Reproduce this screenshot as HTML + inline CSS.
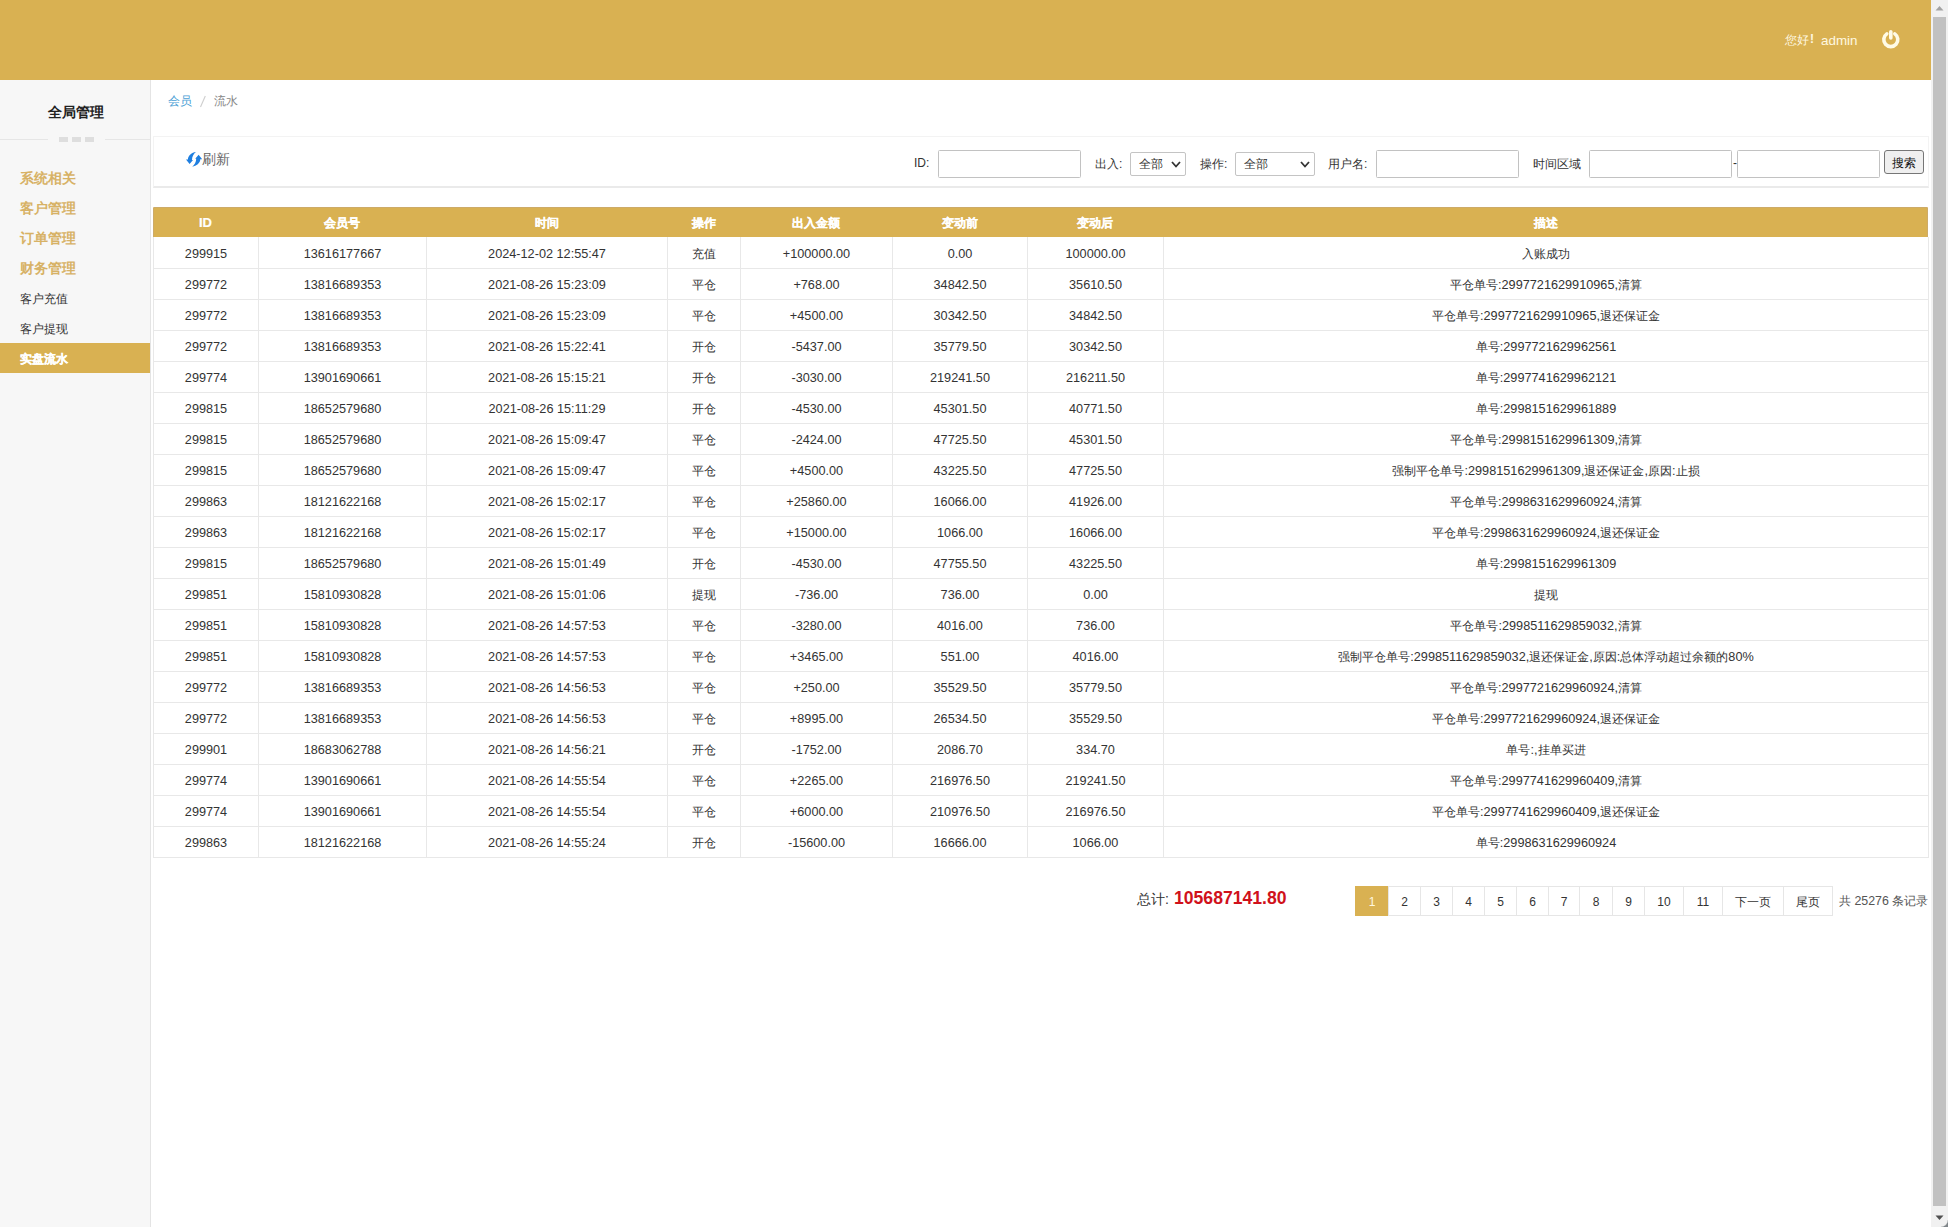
<!DOCTYPE html>
<html>
<head>
<meta charset="utf-8">
<style>
html,body{margin:0;padding:0;}
body{width:1948px;height:1227px;overflow:hidden;position:relative;background:#fff;font-family:"Liberation Sans",sans-serif;color:#333;}
.abs{position:absolute;}
#hdr{position:absolute;left:0;top:0;width:1931px;height:80px;background:#d9b152;}
#hello{position:absolute;left:1785px;top:32px;width:80px;height:16px;font-size:12px;color:#fff8e0;white-space:nowrap;}
#power{position:absolute;left:1881px;top:30px;width:20px;height:20px;}
#side{position:absolute;left:0;top:80px;width:150px;height:1147px;background:#f7f7f7;border-right:1px solid #e4e4e4;}
#side .title{position:absolute;left:1px;top:24px;width:150px;text-align:center;font-size:14px;font-weight:bold;color:#222;}
#side .sepl{position:absolute;top:59px;height:1px;background:#e6e6e6;}
#side .dash{position:absolute;top:57px;width:9px;height:5px;background:#dedede;}
.m1{position:absolute;left:20px;font-size:14px;font-weight:bold;color:#d7b266;white-space:nowrap;}
.m2{position:absolute;left:20px;font-size:12px;color:#333;white-space:nowrap;}
.mact{position:absolute;left:0;width:150px;height:29px;background:#d9b152;}
#scroll{position:absolute;left:1931px;top:0;width:17px;height:1227px;background:#f1f1f1;}
#thumb{position:absolute;left:2px;top:17px;width:13px;height:1189px;background:#c1c1c1;}
.crumb{position:absolute;top:93px;font-size:12px;white-space:nowrap;}
#tool{position:absolute;left:153px;top:136px;width:1774px;height:49px;border:1px solid #f3f3f3;border-bottom:2px solid #eaeaea;background:#fff;}
.lbl{position:absolute;font-size:12px;color:#333;white-space:nowrap;}
.inp{position:absolute;top:150px;height:26px;border:1px solid #c2c2c2;border-radius:1.5px;background:#fff;}
.sel{position:absolute;top:152px;height:22px;border:1px solid #c4c4c4;border-radius:2px;background:#fff;font-size:12px;}
.btn{position:absolute;border:1px solid #767676;border-radius:3px;background:#efefef;font-size:12px;text-align:center;color:#111;}
.thead{position:absolute;background:#d9b152;border-radius:2px 2px 0 0;box-shadow:inset 0 1px 0 #cdab68,inset 1px 0 0 #cdab68,inset -1px 0 0 #cdab68;}
.th{position:absolute;text-align:center;color:#fff;font-weight:bold;-webkit-text-stroke:0.2px #fff;font-size:13px;padding-top:1px;box-sizing:border-box;}
.vl{position:absolute;width:1px;background:#e8e8e8;}
.hl{position:absolute;height:1px;background:#e8e8e8;}
.td{position:absolute;height:30px;line-height:32px;text-align:center;font-size:12.7px;color:#333;white-space:nowrap;}
.cj{font-size:12px;}
.pg{position:absolute;top:886px;height:28px;line-height:30px;text-align:center;font-size:12px;color:#333;border:1px solid #e6e6e6;background:#fff;}
</style>
</head>
<body>
<div id="hdr">
  <div id="hello"><span class="abs" style="left:0;top:0">您好</span><span class="abs" style="left:25px;top:0;font-weight:bold">!</span><span class="abs" style="left:36px;top:1px;font-size:13.4px">admin</span></div>
  <svg id="power" viewBox="0 0 20 20"><path d="M5.79 3.87 A7 7 0 1 0 13.81 3.87" fill="none" stroke="#fffbe6" stroke-width="3.6" stroke-linecap="round"/><line x1="9.8" y1="1.8" x2="9.8" y2="8" stroke="#fffbe6" stroke-width="3.6" stroke-linecap="round"/></svg>
</div>
<div id="side">
  <div class="title">全局管理</div>
  <div class="sepl" style="left:0;width:48px"></div>
  <div class="dash" style="left:59px"></div>
  <div class="dash" style="left:72px"></div>
  <div class="dash" style="left:85px"></div>
  <div class="sepl" style="left:105px;width:45px"></div>
  <div class="m1" style="top:90px">系统相关</div>
  <div class="m1" style="top:120px">客户管理</div>
  <div class="m1" style="top:150px">订单管理</div>
  <div class="m1" style="top:180px">财务管理</div>
  <div class="m2" style="top:211px">客户充值</div>
  <div class="m2" style="top:241px">客户提现</div>
  <div class="mact" style="top:263px;height:30px"></div>
  <div class="m2" style="top:271px;color:#fff;font-weight:bold;-webkit-text-stroke:0.3px #fff">实盘流水</div>
</div>
<div id="scroll">
  <svg class="abs" style="left:4px;top:5px" width="9" height="6" viewBox="0 0 9 6"><path d="M0.5 5.5 L4.5 1 L8.5 5.5 Z" fill="#a3a3a3"/></svg>
  <div id="thumb"></div>
  <div class="abs" style="left:10px;top:1220px;width:7px;height:7px;background:radial-gradient(circle at 0 0,#f1f1f1 6.2px,#7f8589 7.4px)"></div>
  <svg class="abs" style="left:4px;top:1215px" width="9" height="6" viewBox="0 0 9 6"><path d="M0.5 0.5 L4.5 5 L8.5 0.5 Z" fill="#505050"/></svg>
</div>

<div class="crumb" style="left:168px;color:#4aa0d5">会员</div>
<svg class="abs" style="left:199px;top:95px" width="8" height="13" viewBox="0 0 8 13"><line x1="6.3" y1="1" x2="1.5" y2="12" stroke="#cfcfcf" stroke-width="1.1"/></svg>
<div class="crumb" style="left:214px;color:#888">流水</div>

<div id="tool"></div>
<svg class="abs" style="left:183px;top:149px" width="22" height="20" viewBox="0 0 22 20"><path d="M12.9 3.0 C8.8 3.6 5.0 6.6 4.9 10.4 L3.0 10.5 L6.6 15.0 L10.0 11.0 L9.0 10.9 C9.0 7.6 10.6 4.8 12.9 3.0Z" fill="#1f7fe0"/><path d="M9.3 17.7 C13.4 17.1 17.2 14.1 17.3 10.3 L19.2 10.2 L15.6 5.7 L12.2 9.7 L13.2 9.8 C13.2 13.1 11.6 15.9 9.3 17.7Z" fill="#1f7fe0"/></svg>
<div class="lbl" style="left:202px;top:151px;font-size:14px;color:#666">刷新</div>

<div class="lbl" style="left:914px;top:156px">ID:</div>
<div class="inp" style="left:938px;width:141px"></div>
<div class="lbl" style="left:1095px;top:156px">出入:</div>
<div class="sel" style="left:1130px;width:54px"><span class="abs" style="left:8px;top:3px">全部</span><svg class="abs" style="left:40px;top:8px" width="10" height="7" viewBox="0 0 10 7"><path d="M1 1 L5 5.5 L9 1" fill="none" stroke="#333" stroke-width="1.8"/></svg></div>
<div class="lbl" style="left:1200px;top:156px">操作:</div>
<div class="sel" style="left:1235px;width:78px"><span class="abs" style="left:8px;top:3px">全部</span><svg class="abs" style="left:64px;top:8px" width="10" height="7" viewBox="0 0 10 7"><path d="M1 1 L5 5.5 L9 1" fill="none" stroke="#333" stroke-width="1.8"/></svg></div>
<div class="lbl" style="left:1328px;top:156px">用户名:</div>
<div class="inp" style="left:1376px;width:141px"></div>
<div class="lbl" style="left:1533px;top:156px">时间区域</div>
<div class="inp" style="left:1589px;width:141px"></div>
<div class="lbl" style="left:1733px;top:156px">-</div>
<div class="inp" style="left:1737px;width:141px"></div>
<div class="btn" style="left:1884px;top:150px;width:38px;height:22px;line-height:24px">搜索</div>

<div class="thead" style="left:153px;top:207px;width:1775px;height:30px"></div>
<div class="th" style="left:153px;top:207px;width:105px;height:30px;line-height:30px">ID</div>
<div class="th" style="left:258px;top:207px;width:168px;height:30px;line-height:30px"><span class="cj">会员号</span></div>
<div class="th" style="left:426px;top:207px;width:241px;height:30px;line-height:30px"><span class="cj">时间</span></div>
<div class="th" style="left:667px;top:207px;width:73px;height:30px;line-height:30px"><span class="cj">操作</span></div>
<div class="th" style="left:740px;top:207px;width:152px;height:30px;line-height:30px"><span class="cj">出入金额</span></div>
<div class="th" style="left:892px;top:207px;width:135px;height:30px;line-height:30px"><span class="cj">变动前</span></div>
<div class="th" style="left:1027px;top:207px;width:136px;height:30px;line-height:30px"><span class="cj">变动后</span></div>
<div class="th" style="left:1163px;top:207px;width:766px;height:30px;line-height:30px"><span class="cj">描述</span></div>
<div class="vl" style="left:153px;top:237px;height:621px"></div>
<div class="vl" style="left:258px;top:237px;height:621px"></div>
<div class="vl" style="left:426px;top:237px;height:621px"></div>
<div class="vl" style="left:667px;top:237px;height:621px"></div>
<div class="vl" style="left:740px;top:237px;height:621px"></div>
<div class="vl" style="left:892px;top:237px;height:621px"></div>
<div class="vl" style="left:1027px;top:237px;height:621px"></div>
<div class="vl" style="left:1163px;top:237px;height:621px"></div>
<div class="vl" style="left:1928px;top:237px;height:621px"></div>
<div class="hl" style="left:153px;top:268px;width:1776px"></div>
<div class="hl" style="left:153px;top:299px;width:1776px"></div>
<div class="hl" style="left:153px;top:330px;width:1776px"></div>
<div class="hl" style="left:153px;top:361px;width:1776px"></div>
<div class="hl" style="left:153px;top:392px;width:1776px"></div>
<div class="hl" style="left:153px;top:423px;width:1776px"></div>
<div class="hl" style="left:153px;top:454px;width:1776px"></div>
<div class="hl" style="left:153px;top:485px;width:1776px"></div>
<div class="hl" style="left:153px;top:516px;width:1776px"></div>
<div class="hl" style="left:153px;top:547px;width:1776px"></div>
<div class="hl" style="left:153px;top:578px;width:1776px"></div>
<div class="hl" style="left:153px;top:609px;width:1776px"></div>
<div class="hl" style="left:153px;top:640px;width:1776px"></div>
<div class="hl" style="left:153px;top:671px;width:1776px"></div>
<div class="hl" style="left:153px;top:702px;width:1776px"></div>
<div class="hl" style="left:153px;top:733px;width:1776px"></div>
<div class="hl" style="left:153px;top:764px;width:1776px"></div>
<div class="hl" style="left:153px;top:795px;width:1776px"></div>
<div class="hl" style="left:153px;top:826px;width:1776px"></div>
<div class="hl" style="left:153px;top:857px;width:1776px"></div>
<div class="td" style="left:154px;top:238px;width:104px">299915</div>
<div class="td" style="left:259px;top:238px;width:167px">13616177667</div>
<div class="td" style="left:427px;top:238px;width:240px">2024-12-02 12:55:47</div>
<div class="td" style="left:668px;top:238px;width:72px"><span class="cj">充值</span></div>
<div class="td" style="left:741px;top:238px;width:151px">+100000.00</div>
<div class="td" style="left:893px;top:238px;width:134px">0.00</div>
<div class="td" style="left:1028px;top:238px;width:135px">100000.00</div>
<div class="td" style="left:1164px;top:238px;width:764px"><span class="cj">入账成功</span></div>
<div class="td" style="left:154px;top:269px;width:104px">299772</div>
<div class="td" style="left:259px;top:269px;width:167px">13816689353</div>
<div class="td" style="left:427px;top:269px;width:240px">2021-08-26 15:23:09</div>
<div class="td" style="left:668px;top:269px;width:72px"><span class="cj">平仓</span></div>
<div class="td" style="left:741px;top:269px;width:151px">+768.00</div>
<div class="td" style="left:893px;top:269px;width:134px">34842.50</div>
<div class="td" style="left:1028px;top:269px;width:135px">35610.50</div>
<div class="td" style="left:1164px;top:269px;width:764px"><span class="cj">平仓单号</span>:2997721629910965,<span class="cj">清算</span></div>
<div class="td" style="left:154px;top:300px;width:104px">299772</div>
<div class="td" style="left:259px;top:300px;width:167px">13816689353</div>
<div class="td" style="left:427px;top:300px;width:240px">2021-08-26 15:23:09</div>
<div class="td" style="left:668px;top:300px;width:72px"><span class="cj">平仓</span></div>
<div class="td" style="left:741px;top:300px;width:151px">+4500.00</div>
<div class="td" style="left:893px;top:300px;width:134px">30342.50</div>
<div class="td" style="left:1028px;top:300px;width:135px">34842.50</div>
<div class="td" style="left:1164px;top:300px;width:764px"><span class="cj">平仓单号</span>:2997721629910965,<span class="cj">退还保证金</span></div>
<div class="td" style="left:154px;top:331px;width:104px">299772</div>
<div class="td" style="left:259px;top:331px;width:167px">13816689353</div>
<div class="td" style="left:427px;top:331px;width:240px">2021-08-26 15:22:41</div>
<div class="td" style="left:668px;top:331px;width:72px"><span class="cj">开仓</span></div>
<div class="td" style="left:741px;top:331px;width:151px">-5437.00</div>
<div class="td" style="left:893px;top:331px;width:134px">35779.50</div>
<div class="td" style="left:1028px;top:331px;width:135px">30342.50</div>
<div class="td" style="left:1164px;top:331px;width:764px"><span class="cj">单号</span>:2997721629962561</div>
<div class="td" style="left:154px;top:362px;width:104px">299774</div>
<div class="td" style="left:259px;top:362px;width:167px">13901690661</div>
<div class="td" style="left:427px;top:362px;width:240px">2021-08-26 15:15:21</div>
<div class="td" style="left:668px;top:362px;width:72px"><span class="cj">开仓</span></div>
<div class="td" style="left:741px;top:362px;width:151px">-3030.00</div>
<div class="td" style="left:893px;top:362px;width:134px">219241.50</div>
<div class="td" style="left:1028px;top:362px;width:135px">216211.50</div>
<div class="td" style="left:1164px;top:362px;width:764px"><span class="cj">单号</span>:2997741629962121</div>
<div class="td" style="left:154px;top:393px;width:104px">299815</div>
<div class="td" style="left:259px;top:393px;width:167px">18652579680</div>
<div class="td" style="left:427px;top:393px;width:240px">2021-08-26 15:11:29</div>
<div class="td" style="left:668px;top:393px;width:72px"><span class="cj">开仓</span></div>
<div class="td" style="left:741px;top:393px;width:151px">-4530.00</div>
<div class="td" style="left:893px;top:393px;width:134px">45301.50</div>
<div class="td" style="left:1028px;top:393px;width:135px">40771.50</div>
<div class="td" style="left:1164px;top:393px;width:764px"><span class="cj">单号</span>:2998151629961889</div>
<div class="td" style="left:154px;top:424px;width:104px">299815</div>
<div class="td" style="left:259px;top:424px;width:167px">18652579680</div>
<div class="td" style="left:427px;top:424px;width:240px">2021-08-26 15:09:47</div>
<div class="td" style="left:668px;top:424px;width:72px"><span class="cj">平仓</span></div>
<div class="td" style="left:741px;top:424px;width:151px">-2424.00</div>
<div class="td" style="left:893px;top:424px;width:134px">47725.50</div>
<div class="td" style="left:1028px;top:424px;width:135px">45301.50</div>
<div class="td" style="left:1164px;top:424px;width:764px"><span class="cj">平仓单号</span>:2998151629961309,<span class="cj">清算</span></div>
<div class="td" style="left:154px;top:455px;width:104px">299815</div>
<div class="td" style="left:259px;top:455px;width:167px">18652579680</div>
<div class="td" style="left:427px;top:455px;width:240px">2021-08-26 15:09:47</div>
<div class="td" style="left:668px;top:455px;width:72px"><span class="cj">平仓</span></div>
<div class="td" style="left:741px;top:455px;width:151px">+4500.00</div>
<div class="td" style="left:893px;top:455px;width:134px">43225.50</div>
<div class="td" style="left:1028px;top:455px;width:135px">47725.50</div>
<div class="td" style="left:1164px;top:455px;width:764px"><span class="cj">强制平仓单号</span>:2998151629961309,<span class="cj">退还保证金</span>,<span class="cj">原因</span>:<span class="cj">止损</span></div>
<div class="td" style="left:154px;top:486px;width:104px">299863</div>
<div class="td" style="left:259px;top:486px;width:167px">18121622168</div>
<div class="td" style="left:427px;top:486px;width:240px">2021-08-26 15:02:17</div>
<div class="td" style="left:668px;top:486px;width:72px"><span class="cj">平仓</span></div>
<div class="td" style="left:741px;top:486px;width:151px">+25860.00</div>
<div class="td" style="left:893px;top:486px;width:134px">16066.00</div>
<div class="td" style="left:1028px;top:486px;width:135px">41926.00</div>
<div class="td" style="left:1164px;top:486px;width:764px"><span class="cj">平仓单号</span>:2998631629960924,<span class="cj">清算</span></div>
<div class="td" style="left:154px;top:517px;width:104px">299863</div>
<div class="td" style="left:259px;top:517px;width:167px">18121622168</div>
<div class="td" style="left:427px;top:517px;width:240px">2021-08-26 15:02:17</div>
<div class="td" style="left:668px;top:517px;width:72px"><span class="cj">平仓</span></div>
<div class="td" style="left:741px;top:517px;width:151px">+15000.00</div>
<div class="td" style="left:893px;top:517px;width:134px">1066.00</div>
<div class="td" style="left:1028px;top:517px;width:135px">16066.00</div>
<div class="td" style="left:1164px;top:517px;width:764px"><span class="cj">平仓单号</span>:2998631629960924,<span class="cj">退还保证金</span></div>
<div class="td" style="left:154px;top:548px;width:104px">299815</div>
<div class="td" style="left:259px;top:548px;width:167px">18652579680</div>
<div class="td" style="left:427px;top:548px;width:240px">2021-08-26 15:01:49</div>
<div class="td" style="left:668px;top:548px;width:72px"><span class="cj">开仓</span></div>
<div class="td" style="left:741px;top:548px;width:151px">-4530.00</div>
<div class="td" style="left:893px;top:548px;width:134px">47755.50</div>
<div class="td" style="left:1028px;top:548px;width:135px">43225.50</div>
<div class="td" style="left:1164px;top:548px;width:764px"><span class="cj">单号</span>:2998151629961309</div>
<div class="td" style="left:154px;top:579px;width:104px">299851</div>
<div class="td" style="left:259px;top:579px;width:167px">15810930828</div>
<div class="td" style="left:427px;top:579px;width:240px">2021-08-26 15:01:06</div>
<div class="td" style="left:668px;top:579px;width:72px"><span class="cj">提现</span></div>
<div class="td" style="left:741px;top:579px;width:151px">-736.00</div>
<div class="td" style="left:893px;top:579px;width:134px">736.00</div>
<div class="td" style="left:1028px;top:579px;width:135px">0.00</div>
<div class="td" style="left:1164px;top:579px;width:764px"><span class="cj">提现</span></div>
<div class="td" style="left:154px;top:610px;width:104px">299851</div>
<div class="td" style="left:259px;top:610px;width:167px">15810930828</div>
<div class="td" style="left:427px;top:610px;width:240px">2021-08-26 14:57:53</div>
<div class="td" style="left:668px;top:610px;width:72px"><span class="cj">平仓</span></div>
<div class="td" style="left:741px;top:610px;width:151px">-3280.00</div>
<div class="td" style="left:893px;top:610px;width:134px">4016.00</div>
<div class="td" style="left:1028px;top:610px;width:135px">736.00</div>
<div class="td" style="left:1164px;top:610px;width:764px"><span class="cj">平仓单号</span>:2998511629859032,<span class="cj">清算</span></div>
<div class="td" style="left:154px;top:641px;width:104px">299851</div>
<div class="td" style="left:259px;top:641px;width:167px">15810930828</div>
<div class="td" style="left:427px;top:641px;width:240px">2021-08-26 14:57:53</div>
<div class="td" style="left:668px;top:641px;width:72px"><span class="cj">平仓</span></div>
<div class="td" style="left:741px;top:641px;width:151px">+3465.00</div>
<div class="td" style="left:893px;top:641px;width:134px">551.00</div>
<div class="td" style="left:1028px;top:641px;width:135px">4016.00</div>
<div class="td" style="left:1164px;top:641px;width:764px"><span class="cj">强制平仓单号</span>:2998511629859032,<span class="cj">退还保证金</span>,<span class="cj">原因</span>:<span class="cj">总体浮动超过余额的</span>80%</div>
<div class="td" style="left:154px;top:672px;width:104px">299772</div>
<div class="td" style="left:259px;top:672px;width:167px">13816689353</div>
<div class="td" style="left:427px;top:672px;width:240px">2021-08-26 14:56:53</div>
<div class="td" style="left:668px;top:672px;width:72px"><span class="cj">平仓</span></div>
<div class="td" style="left:741px;top:672px;width:151px">+250.00</div>
<div class="td" style="left:893px;top:672px;width:134px">35529.50</div>
<div class="td" style="left:1028px;top:672px;width:135px">35779.50</div>
<div class="td" style="left:1164px;top:672px;width:764px"><span class="cj">平仓单号</span>:2997721629960924,<span class="cj">清算</span></div>
<div class="td" style="left:154px;top:703px;width:104px">299772</div>
<div class="td" style="left:259px;top:703px;width:167px">13816689353</div>
<div class="td" style="left:427px;top:703px;width:240px">2021-08-26 14:56:53</div>
<div class="td" style="left:668px;top:703px;width:72px"><span class="cj">平仓</span></div>
<div class="td" style="left:741px;top:703px;width:151px">+8995.00</div>
<div class="td" style="left:893px;top:703px;width:134px">26534.50</div>
<div class="td" style="left:1028px;top:703px;width:135px">35529.50</div>
<div class="td" style="left:1164px;top:703px;width:764px"><span class="cj">平仓单号</span>:2997721629960924,<span class="cj">退还保证金</span></div>
<div class="td" style="left:154px;top:734px;width:104px">299901</div>
<div class="td" style="left:259px;top:734px;width:167px">18683062788</div>
<div class="td" style="left:427px;top:734px;width:240px">2021-08-26 14:56:21</div>
<div class="td" style="left:668px;top:734px;width:72px"><span class="cj">开仓</span></div>
<div class="td" style="left:741px;top:734px;width:151px">-1752.00</div>
<div class="td" style="left:893px;top:734px;width:134px">2086.70</div>
<div class="td" style="left:1028px;top:734px;width:135px">334.70</div>
<div class="td" style="left:1164px;top:734px;width:764px"><span class="cj">单号</span>:,<span class="cj">挂单买进</span></div>
<div class="td" style="left:154px;top:765px;width:104px">299774</div>
<div class="td" style="left:259px;top:765px;width:167px">13901690661</div>
<div class="td" style="left:427px;top:765px;width:240px">2021-08-26 14:55:54</div>
<div class="td" style="left:668px;top:765px;width:72px"><span class="cj">平仓</span></div>
<div class="td" style="left:741px;top:765px;width:151px">+2265.00</div>
<div class="td" style="left:893px;top:765px;width:134px">216976.50</div>
<div class="td" style="left:1028px;top:765px;width:135px">219241.50</div>
<div class="td" style="left:1164px;top:765px;width:764px"><span class="cj">平仓单号</span>:2997741629960409,<span class="cj">清算</span></div>
<div class="td" style="left:154px;top:796px;width:104px">299774</div>
<div class="td" style="left:259px;top:796px;width:167px">13901690661</div>
<div class="td" style="left:427px;top:796px;width:240px">2021-08-26 14:55:54</div>
<div class="td" style="left:668px;top:796px;width:72px"><span class="cj">平仓</span></div>
<div class="td" style="left:741px;top:796px;width:151px">+6000.00</div>
<div class="td" style="left:893px;top:796px;width:134px">210976.50</div>
<div class="td" style="left:1028px;top:796px;width:135px">216976.50</div>
<div class="td" style="left:1164px;top:796px;width:764px"><span class="cj">平仓单号</span>:2997741629960409,<span class="cj">退还保证金</span></div>
<div class="td" style="left:154px;top:827px;width:104px">299863</div>
<div class="td" style="left:259px;top:827px;width:167px">18121622168</div>
<div class="td" style="left:427px;top:827px;width:240px">2021-08-26 14:55:24</div>
<div class="td" style="left:668px;top:827px;width:72px"><span class="cj">开仓</span></div>
<div class="td" style="left:741px;top:827px;width:151px">-15600.00</div>
<div class="td" style="left:893px;top:827px;width:134px">16666.00</div>
<div class="td" style="left:1028px;top:827px;width:135px">1066.00</div>
<div class="td" style="left:1164px;top:827px;width:764px"><span class="cj">单号</span>:2998631629960924</div>

<div class="lbl" style="left:1137px;top:891px;font-size:14px">总计:</div>
<div class="lbl" style="left:1174px;top:888px;font-size:17.6px;font-weight:bold;color:#d0111b">105687141.80</div>

<div class="pg" style="left:1355px;width:32px;background:#d9b152;border-color:#d9b152;color:#fff8e0">1</div>
<div class="pg" style="left:1388px;width:31px">2</div>
<div class="pg" style="left:1420px;width:31px">3</div>
<div class="pg" style="left:1452px;width:31px">4</div>
<div class="pg" style="left:1484px;width:31px">5</div>
<div class="pg" style="left:1516px;width:31px">6</div>
<div class="pg" style="left:1548px;width:30px">7</div>
<div class="pg" style="left:1579px;width:32px">8</div>
<div class="pg" style="left:1612px;width:31px">9</div>
<div class="pg" style="left:1644px;width:38px">10</div>
<div class="pg" style="left:1683px;width:38px">11</div>
<div class="pg" style="left:1722px;width:60px">下一页</div>
<div class="pg" style="left:1783px;width:48px">尾页</div>
<div class="lbl" style="left:1839px;top:893px;color:#555;font-size:12.4px">共 25276 条记录</div>

</body>
</html>
